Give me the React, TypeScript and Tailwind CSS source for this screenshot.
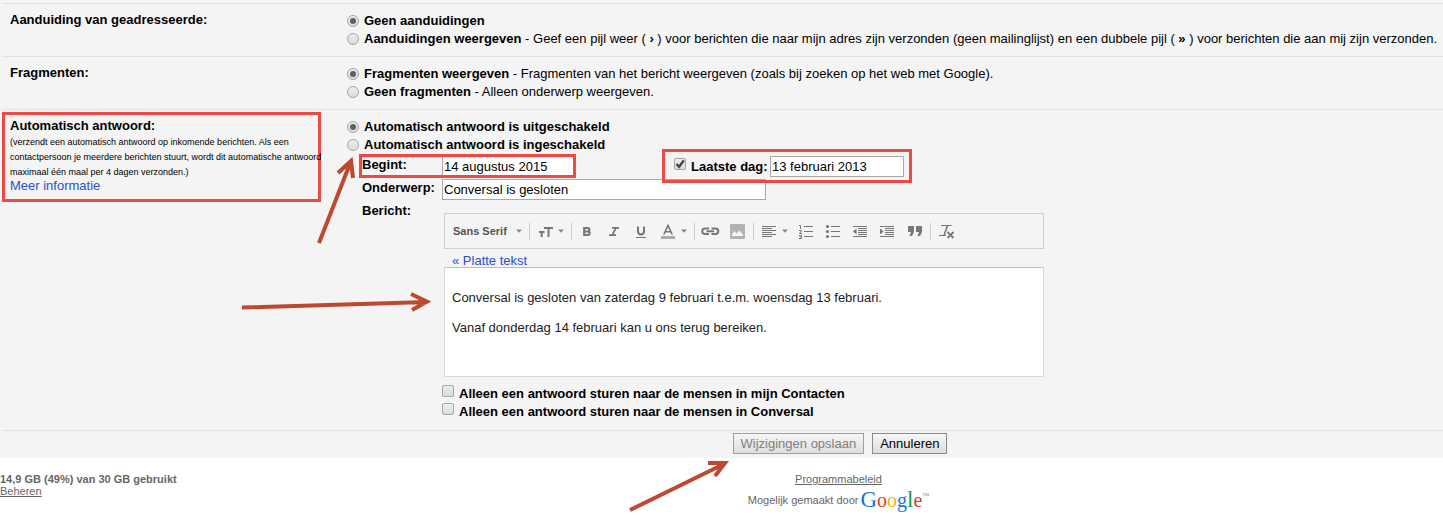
import React from 'react';

type ChoiceProps = {
  name: string;
  title: string;
  defaultChecked?: boolean;
  children?: React.ReactNode;
};

const Radio: React.FC<ChoiceProps> = ({ name, title, defaultChecked, children }) => (
  <label className="flex h-[18px] items-center gap-[5px] whitespace-nowrap">
    <input
      type="radio"
      name={name}
      defaultChecked={defaultChecked}
      className="grid size-3 shrink-0 appearance-none place-content-center rounded-full border border-[#a6a6a6] bg-linear-to-b from-[#ececec] to-[#dcdcdc] before:size-[6px] before:rounded-full checked:before:bg-[#5f5f5f]"
    />
    <span>
      <b>{title}</b>
      {children}
    </span>
  </label>
);

const Checkbox: React.FC<{ id: string; defaultChecked?: boolean }> = ({ id, defaultChecked }) => (
  <span className="relative flex size-3 shrink-0">
    <input
      id={id}
      type="checkbox"
      defaultChecked={defaultChecked}
      className="peer size-3 appearance-none rounded-[2px] border border-[#a6a6a6] bg-linear-to-b from-[#ececec] to-[#dcdcdc]"
    />
    <svg viewBox="0 0 12 12" className="pointer-events-none absolute inset-0 hidden peer-checked:block" fill="none" stroke="#444" strokeWidth="2.4">
      <path d="M2.5 6l2.6 2.8L9.8 2.4" />
    </svg>
  </span>
);

const Row: React.FC<{ label: string; children: React.ReactNode }> = ({ label, children }) => (
  <section className="ml-0.5 grid grid-cols-[345px_1fr] border-t border-[#e2e2e2] py-2">
    <h2 className="pl-2 leading-4 font-bold">{label}</h2>
    <div>{children}</div>
  </section>
);

const Tool: React.FC<{ label: string; children: React.ReactNode }> = ({ label, children }) => (
  <button type="button" aria-label={label} className="flex h-[34px] w-[27px] items-center justify-center">
    <svg width="17" height="16" viewBox="0 0 17 16" className="overflow-visible" fill="none" stroke="#777" strokeWidth="1">
      {children}
    </svg>
  </button>
);

const Caret: React.FC<{ label: string }> = ({ label }) => (
  <button type="button" aria-label={label} className="flex h-[34px] w-[10px] items-center">
    <svg width="6" height="4" viewBox="0 0 6 4" fill="#888">
      <path d="M0 .5h6L3 3.7z" />
    </svg>
  </button>
);

const Group: React.FC<{ last?: boolean; children: React.ReactNode }> = ({ last, children }) => (
  <>
    <div className="flex items-center pr-[3px] pl-px">{children}</div>
    {!last && <div className="h-[17px] w-px bg-[#ccc]" />}
  </>
);

const Toolbar: React.FC = () => (
  <div role="toolbar" aria-label="Opmaak" className="flex h-9 items-center border border-[#cfcfcf]">
    <Group>
      <select aria-label="Lettertype" className="w-[70px] appearance-none pl-[7px] text-[11px] font-bold text-[#555]">
        <option>Sans Serif</option>
      </select>
      <Caret label="Lettertypen" />
    </Group>
    <Group>
      <Tool label="Grootte">
        <path d="M8 5h9M12.500 5v9M3 9h5.500M5.700 9v5" strokeWidth="2" />
      </Tool>
      <Caret label="Grootten" />
    </Group>
    <Group>
      <Tool label="Vet">
        <path d="M6.200 5h3.400a1.750 1.750 0 010 3.500H6.200h3.700a1.750 1.750 0 010 3.500H6.200z" strokeWidth="2.200" />
      </Tool>
      <Tool label="Cursief">
        <path d="M7 4.800h7M4 12.200h7M11 4.800L7.200 12.200" strokeWidth="1.800" />
      </Tool>
      <Tool label="Onderstrepen">
        <path d="M6 3.500v4.800c0 4.200 6 4.200 6 0V3.500" strokeWidth="2" />
        <path d="M4 14.500h10" />
      </Tool>
      <Tool label="Tekstkleur">
        <path d="M4.800 11.500L9 2.500l4.200 9M6.300 8.700h5.400" strokeWidth="1.600" />
        <path d="M2 14.500h14" stroke="#aaa" strokeWidth="3" />
      </Tool>
      <Caret label="Kleuren" />
    </Group>
    <Group>
      <Tool label="Link">
        <path d="M8 5.500H4a2.700 2.700 0 000 5.500h4M10.500 5.500h4a2.700 2.700 0 010 5.500h-4M5.500 8.200h7.500" strokeWidth="2" />
      </Tool>
      <Tool label="Afbeelding">
        <rect x="2" y="1" width="15" height="15" rx="1" fill="#b2b2b2" stroke="none" />
        <path d="M4 13v-2l2.500-3 2 2.500L11.500 7.500 15 11.500V13z" fill="#f4f4f4" stroke="none" />
      </Tool>
    </Group>
    <Group>
      <Tool label="Uitlijnen">
        <path d="M2 3.500h14M2 5.500h10M2 7.500h14M2 9.500h10M2 11.500h14M2 13.500h10" />
      </Tool>
      <Caret label="Uitlijningen" />
      <Tool label="Genummerde lijst">
        <path d="M7 3.500h9M7 8.500h9M7 13.500h9" />
        <path d="M2 2.500h1.500V6M2 7.500h2.500L2.500 10.500H5M2 12.500h2.500v3H2M2.500 14h2" />
      </Tool>
      <Tool label="Lijst met opsommingstekens">
        <path d="M7 3.500h9M7 8.500h9M7 13.500h9" />
        <g fill="#777" stroke="none">
          <circle cx="3.500" cy="3.500" r="1.600" />
          <circle cx="3.500" cy="8.500" r="1.600" />
          <circle cx="3.500" cy="13.500" r="1.600" />
        </g>
      </Tool>
      <Tool label="Inspringing verkleinen">
        <path d="M2 3.500h14M7 5.500h9M7 7.500h9M7 9.500h9M7 11.500h9M2 13.500h14" />
        <path d="M5.500 5.500v6L2 8.500z" fill="#777" stroke="none" />
      </Tool>
      <Tool label="Inspringing vergroten">
        <path d="M2 3.500h14M7 5.500h9M7 7.500h9M7 9.500h9M7 11.500h9M2 13.500h14" />
        <path d="M2 5.500v6l3.500-3z" fill="#777" stroke="none" />
      </Tool>
      <Tool label="Citeren">
        <path d="M3 3h6v6L7 13H4.500L6 9H3zM11 3h6v6l-2 4h-2.500L14 9h-3z" fill="#777" stroke="none" />
      </Tool>
    </Group>
    <Group last>
      <Tool label="Opmaak verwijderen">
        <path d="M4 2.500h10.500M2 12.500h7" />
        <path d="M10.500 2.500L7 12.500" strokeWidth="1.600" />
        <path d="M10.500 9l6 6M16.500 9l-6 6" strokeWidth="1.800" />
      </Tool>
    </Group>
  </div>
);

const Arrow: React.FC<{ d: string; className: string; width: number; height: number }> = ({ d, className, width, height }) => (
  <svg
    aria-hidden="true"
    className={`pointer-events-none absolute ${className}`}
    width={width}
    height={height}
    fill="none"
    stroke="#be4830"
    strokeWidth="4"
  >
    <path d={d} />
  </svg>
);

const App: React.FC = () => {
  const input = 'h-[21px] border border-[#a9a9a9] bg-white px-px';
  const button = 'h-[21px] border bg-linear-to-b from-[#f6f6f6] to-[#dedede] px-[7px] leading-4';

  return (
    <div className="relative bg-white font-['Liberation_Sans',Arial,sans-serif] text-[13px] text-black">
      <form className="bg-[#f4f4f4] pt-[3px]">
        <Row label="Aanduiding van geadresseerde:">
          <Radio name="indicators" title="Geen aanduidingen" defaultChecked />
          <Radio name="indicators" title="Aanduidingen weergeven">
            {' '}- Geef een pijl weer ( <b>›</b> ) voor berichten die naar mijn adres zijn verzonden (geen mailinglijst) en een
            dubbele pijl ( <b>»</b> ) voor berichten die aan mij zijn verzonden.
          </Radio>
        </Row>

        <Row label="Fragmenten:">
          <Radio name="snippets" title="Fragmenten weergeven" defaultChecked>
            {' '}- Fragmenten van het bericht weergeven (zoals bij zoeken op het web met Google).
          </Radio>
          <Radio name="snippets" title="Geen fragmenten">
            {' '}- Alleen onderwerp weergeven.
          </Radio>
        </Row>

        <section className="ml-0.5 grid grid-cols-[345px_1fr] items-start border-t border-[#e2e2e2] pb-[9px]">
          <div className="mt-0.5 h-[90px] w-[319px] border-3 border-[#ee4a45] px-[5px] pt-0.5">
            <h2 className="leading-[18px] font-bold">Automatisch antwoord:</h2>
            <p className="text-[9px] leading-[15px] whitespace-nowrap">
              (verzendt een automatisch antwoord op inkomende berichten. Als een
              <br />
              contactpersoon je meerdere berichten stuurt, wordt dit automatische antwoord
              <br />
              maximaal één maal per 4 dagen verzonden.)
            </p>
            <a href="#meer" className="block leading-3 text-[#2a50cc]">Meer informatie</a>
          </div>

          <div className="pt-2">
            <Radio name="responder" title="Automatisch antwoord is uitgeschakeld" defaultChecked />
            <Radio name="responder" title="Automatisch antwoord is ingeschakeld" />

            <div className="mt-0.5 grid grid-cols-[80px_1fr] gap-y-0.5 pl-[15px]">
              <label htmlFor="start" className="leading-[18px] font-bold">Begint:</label>
              <div className="relative flex gap-[86px]">
                <input id="start" type="text" defaultValue="14 augustus 2015" className={`${input} w-[134px]`} />
                <div className="pointer-events-none absolute -top-0.5 -left-[83px] h-6 w-[217px] border-3 border-[#ee4a45]" />
                <div className="relative flex pl-3">
                  <div className="pointer-events-none absolute -top-[7px] left-0 h-[34px] w-[250px] border-3 border-[#ee4a45]" />
                  <div className="flex gap-[5px] pt-0.5">
                    <Checkbox id="has-end" defaultChecked />
                    <label htmlFor="has-end" className="w-[79px] leading-[18px] font-bold">Laatste dag:</label>
                  </div>
                  <input aria-label="Laatste dag" type="text" defaultValue="13 februari 2013" className={`${input} w-[134px]`} />
                </div>
              </div>

              <label htmlFor="subject" className="leading-[18px] font-bold">Onderwerp:</label>
              <input id="subject" type="text" defaultValue="Conversal is gesloten" className={`${input} w-[324px]`} />

              <label htmlFor="message" className="leading-[18px] font-bold">Bericht:</label>
              <div className="w-[602px] max-w-full pt-[11px]">
                <div className="pl-0.5">
                  <Toolbar />
                  <a href="#plat" className="ml-2 block pt-[5px] leading-[13px] text-[#2a50cc]">« Platte tekst</a>
                  <textarea
                    id="message"
                    className="block h-[110px] w-full resize-none border border-[#d9d9d9] border-t-[#bfbfbf] bg-white px-[7px] pt-[22px] leading-[15px] text-[#222]"
                    defaultValue={'Conversal is gesloten van zaterdag 9 februari t.e.m. woensdag 13 februari.\n\nVanaf donderdag 14 februari kan u ons terug bereiken.'}
                  />
                </div>
                <div className="flex gap-[5px] pt-2">
                  <Checkbox id="only-contacts" />
                  <label htmlFor="only-contacts" className="leading-[18px] font-bold">
                    Alleen een antwoord sturen naar de mensen in mijn Contacten
                  </label>
                </div>
                <div className="flex gap-[5px]">
                  <Checkbox id="only-domain" />
                  <label htmlFor="only-domain" className="leading-[18px] font-bold">
                    Alleen een antwoord sturen naar de mensen in Conversal
                  </label>
                </div>
              </div>
            </div>
          </div>
        </section>

        <div className="ml-0.5 flex justify-center gap-2 border-t border-[#e2e2e2] pt-0.5 pb-1 pl-[235px]">
          <button type="submit" disabled className={`${button} border-[#a0a0a0] text-[#808080]`}>Wijzigingen opslaan</button>
          <button type="button" className={`${button} border-[#8a8a8a]`}>Annuleren</button>
        </div>
      </form>

      <footer className="grid grid-cols-[234px_1fr] pt-[15px] text-[11px] leading-3 text-[#666]">
        <div>
          <p className="font-bold">14,9 GB (49%) van 30 GB gebruikt</p>
          <a href="#beheren" className="underline">Beheren</a>
        </div>
        <div className="flex flex-col items-center">
          <a href="#beleid" className="underline">Programmabeleid</a>
          <p className="flex h-[30px] items-center gap-0.5">
            Mogelijk gemaakt door
            <span className="flex items-baseline font-['Liberation_Serif',serif] text-[20px] leading-6">
              <span className="text-[23px] text-[#1b6fe0]">G</span>
              <span className="text-[#dd3b2a]">o</span>
              <span className="text-[#f4b400]">o</span>
              <span className="text-[#1b6fe0]">g</span>
              <span className="text-[23px] text-[#0f9d58]">l</span>
              <span className="text-[#dd3b2a]">e</span>
              <sup className="top-0 self-start text-[7px] leading-4 text-[#777]">™</sup>
            </span>
          </p>
        </div>
      </footer>

      <Arrow className="top-[154px] left-[315px]" width={50} height={92} d="M4 89L36 7M23 19L36 7L38 24" />
      <Arrow className="top-[290px] left-[242px]" width={192} height={24} d="M0 17.500L185 12M169 4L185 11.700L170 20" />
      <Arrow className="top-[457px] left-[628px]" width={104} height={56} d="M2 53L96 7M80 6L97 6L87 19" />
    </div>
  );
};

export default App;
